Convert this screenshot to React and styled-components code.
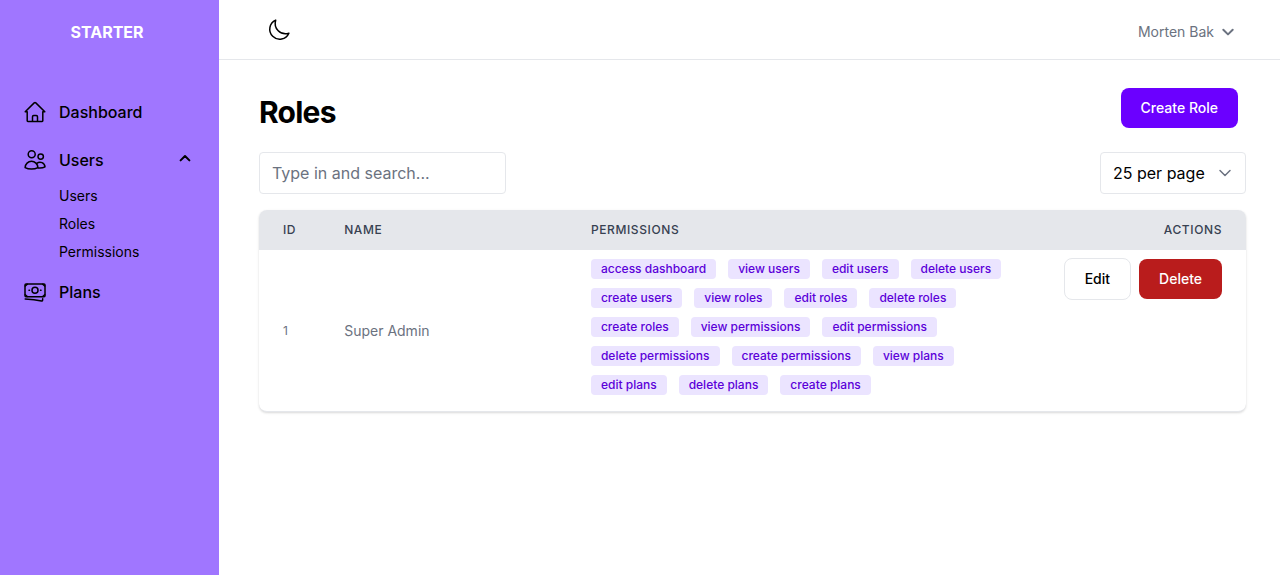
import React, { useState } from "react";
import styled, { createGlobalStyle, css } from "styled-components";

const GlobalStyle = createGlobalStyle`
  *, *::before, *::after { box-sizing: border-box; }
  body { margin: 0; background: #fff; color: #000; font-family: Inter, "Liberation Sans", sans-serif; font-size: 16px; line-height: 24px; }
  button, input, select { font: inherit; color: inherit; margin: 0; }
  a { color: inherit; text-decoration: none; }
`;

const Shell = styled.div`
  display: flex;
  min-height: 100vh;
`;

const Sidebar = styled.aside`
  flex: none;
  width: 219px;
  padding: 20px 24px;
  background: #a076ff;
`;

const Brand = styled.a`
  display: block;
  margin-right: 5px;
  color: #fff;
  font-weight: 700;
  text-align: center;
`;

const Nav = styled.nav`
  display: flex;
  flex-direction: column;
  gap: 12px;
  margin-top: 50px;
`;

const navItem = css`
  display: flex;
  align-items: center;
  gap: 13px;
  width: 100%;
  padding: 6px 0;
  border: 0;
  background: none;
  font-weight: 500;
  text-align: left;
`;

const NavLink = styled.a`${navItem}`;
const NavToggle = styled.button`
  ${navItem}
  cursor: pointer;
  & > :last-child { margin: 0 0 4px auto; }
`;

const SubMenu = styled.div`
  display: flex;
  flex-direction: column;
  gap: 8px;
  margin-top: 8px;
  padding-left: 35px;
  font-size: 14px;
  line-height: 20px;
`;

const Main = styled.div`
  flex: 1;
  min-width: 0;
`;

const TopBar = styled.header`
  display: flex;
  align-items: center;
  justify-content: space-between;
  height: 60px;
  padding: 0 42px 0 48px;
  border-bottom: 1px solid #e5e7eb;
`;

const IconButton = styled.button`
  display: flex;
  padding: 0;
  border: 0;
  background: none;
  cursor: pointer;
`;

const UserButton = styled.button`
  display: flex;
  align-items: center;
  gap: 4px;
  padding: 4px 0 0;
  border: 0;
  background: none;
  color: #6b7280;
  font-size: 14px;
  line-height: 20px;
  cursor: pointer;
`;

const Content = styled.main`
  padding: 28px 34px 28px 40px;
`;

const TitleRow = styled.div`
  display: flex;
  align-items: flex-start;
  justify-content: space-between;
  padding-right: 8px;
`;

const Title = styled.h1`
  margin: 6px 0 0;
  font-size: 30px;
  line-height: 36px;
  font-weight: 700;
  letter-spacing: -0.025em;
`;

const variants = {
  primary: css`background: #6b00ff; color: #fff;`,
  danger: css`background: #b91c1c; color: #fff;`,
  outline: css`background: #fff; color: #000; border: 1px solid #e5e7eb;`,
};

const Button = styled.button`
  padding: 10px 20px;
  border: 0;
  border-radius: 8px;
  font-size: 14px;
  line-height: 20px;
  font-weight: 500;
  cursor: pointer;
  ${({ $variant }) => variants[$variant]}
`;

const Filters = styled.div`
  display: flex;
  justify-content: space-between;
  margin: 22px 0 16px;
`;

const field = css`
  height: 42px;
  border: 1px solid #e5e7eb;
  border-radius: 4px;
  background-color: #fff;
`;

const Search = styled.input`
  ${field}
  width: 25%;
  padding: 8px 12px;
  &::placeholder { color: #6b7280; opacity: 1; }
`;

const SelectBox = styled.div`
  display: grid;
  align-items: center;
  & > * { grid-area: 1 / 1; }
  & > svg { justify-self: end; margin-right: 11px; pointer-events: none; }
`;

const Select = styled.select`
  ${field}
  width: 146px;
  padding: 8px 40px 8px 12px;
  appearance: none;
`;

const Card = styled.div`
  overflow: hidden;
  border-bottom: 1px solid #e5e7eb;
  border-radius: 8px;
  background: #fff;
  box-shadow: 0 1px 3px 0 rgba(0, 0, 0, 0.1), 0 1px 2px 0 rgba(0, 0, 0, 0.06);
`;

const Table = styled.table`
  width: 100%;
  border-collapse: collapse;
  table-layout: fixed;
`;

const Col = styled.col`
  width: ${({ $width }) => $width};
`;

const Th = styled.th`
  padding: 12px 24px;
  background: #e5e7eb;
  color: #374151;
  font-size: 12px;
  line-height: 16px;
  font-weight: 500;
  letter-spacing: 0.05em;
  text-align: ${({ $align }) => $align || "left"};
  text-transform: uppercase;
`;

const Td = styled.td`
  padding: 8px 24px;
  color: #6b7280;
  font-size: ${({ $small }) => ($small ? "12px" : "14px")};
  line-height: 20px;
  vertical-align: ${({ $top }) => ($top ? "top" : "middle")};
`;

const Tags = styled.div`
  display: flex;
  flex-wrap: wrap;
  gap: 9px 12px;
  padding: 1px 0 8px;
`;

const Tag = styled.span`
  padding: 2px 10px;
  border-radius: 4px;
  background: #ebe4ff;
  color: #5b00d9;
  font-size: 12px;
  line-height: 16px;
  font-weight: 500;
  white-space: nowrap;
`;

const Actions = styled.div`
  display: flex;
  align-items: center;
  justify-content: flex-end;
  gap: 8px;
`;

const Svg = styled.svg`
  flex: none;
  fill: none;
  stroke: currentColor;
  stroke-width: ${({ $stroke }) => $stroke || 1.5};
  stroke-linecap: round;
  stroke-linejoin: round;
`;

const HomeIcon = () => (
  <Svg width="22" height="22" viewBox="0 0 22 22" aria-hidden="true">
    <path d="M3.2 10.700H1.200L10.200 1.900Q11 1.200 11.800 1.900L20.800 10.700H18.800M3.200 10.700V19.800Q3.200 20.500 3.900 20.500H18.100Q18.800 20.500 18.800 19.800V10.700M8.500 20.300V15.700Q8.500 14.500 9.700 14.500H12.300Q13.500 14.500 13.500 15.700V20.300" />
  </Svg>
);

const UsersIcon = () => (
  <Svg width="22" height="22" viewBox="0 0 22 22" aria-hidden="true">
    <circle cx="7.700" cy="5.200" r="3.500" />
    <circle cx="16.700" cy="7.600" r="2.700" />
    <path d="M1.100 18.600C1.300 15 4 12.300 7.500 12.300s6.200 2.700 6.400 6.300c-3.600 2-9.200 2-12.800 0Z" />
    <path d="M12.800 14.400c3.300-2.700 8-.4 8.200 3.500-1.800 1-4.200 1.400-6.800 1.100" />
  </Svg>
);

const CashIcon = () => (
  <Svg width="22" height="22" viewBox="0 0 22 22" aria-hidden="true">
    <rect x="1" y="2.900" width="20" height="12.900" rx="1" />
    <circle cx="11" cy="9.300" r="3" />
    <path d="M5 9.300h.5M16.500 9.300h.5M1.300 5 3.300 3.200M18.700 3.200l2 1.800M1.300 13.700l2 1.800M18.700 15.500l2-1.800M1.200 18c6 .2 11 .7 16.300 1.900q1 .2 1.100-.7l.1-1.500" />
  </Svg>
);

const MoonIcon = () => (
  <Svg width="24" height="24" viewBox="0 0 24 24" aria-hidden="true">
    <path d="M8.700 2.100A10 10 0 1 0 21.900 15.300C13.500 17.800 6.200 10.500 8.700 2.100Z" />
  </Svg>
);

const Chevron = ({ up }) => (
  <Svg $stroke={2} width="20" height="20" viewBox="0 0 20 20" aria-hidden="true">
    <path d={up ? "M5.600 12.400 10 8l4.400 4.400" : "M5.300 7.700 10 12.400l4.700-4.700"} />
  </Svg>
);

const ArrowIcon = styled(Svg)`
  color: #6b7280;
`;

const PERMISSIONS = [
  "access dashboard", "view users", "edit users", "delete users",
  "create users", "view roles", "edit roles", "delete roles",
  "create roles", "view permissions", "edit permissions",
  "delete permissions", "create permissions", "view plans",
  "edit plans", "delete plans", "create plans",
];

const ROLES = [{ id: 1, name: "Super Admin", permissions: PERMISSIONS }];

export default function App() {
  const [open, setOpen] = useState(true);
  return (
    <>
      <GlobalStyle />
      <Shell>
        <Sidebar>
          <Brand href="#">STARTER</Brand>
          <Nav>
            <NavLink href="#dashboard"><HomeIcon />Dashboard</NavLink>
            <div>
              <NavToggle type="button" aria-expanded={open} onClick={() => setOpen(!open)}>
                <UsersIcon />Users<Chevron up={open} />
              </NavToggle>
              {open && (
                <SubMenu>
                  <a href="#users">Users</a>
                  <a href="#roles">Roles</a>
                  <a href="#permissions">Permissions</a>
                </SubMenu>
              )}
            </div>
            <NavLink href="#plans"><CashIcon />Plans</NavLink>
          </Nav>
        </Sidebar>
        <Main>
          <TopBar>
            <IconButton type="button" aria-label="Toggle dark mode"><MoonIcon /></IconButton>
            <UserButton type="button">Morten Bak<Chevron /></UserButton>
          </TopBar>
          <Content>
            <TitleRow>
              <Title>Roles</Title>
              <Button type="button" $variant="primary">Create Role</Button>
            </TitleRow>
            <Filters>
              <Search type="text" aria-label="Search roles" placeholder="Type in and search..." />
              <SelectBox>
                <Select aria-label="Roles per page" defaultValue="25">
                  <option value="10">10 per page</option>
                  <option value="25">25 per page</option>
                  <option value="50">50 per page</option>
                </Select>
                <ArrowIcon width="20" height="20" viewBox="0 0 20 20" aria-hidden="true">
                  <path d="m5 7.500 5 5 5-5" />
                </ArrowIcon>
              </SelectBox>
            </Filters>
            <Card>
              <Table>
                <colgroup>
                  <Col $width="6.2%" />
                  <Col $width="25%" />
                  <Col />
                  <Col $width="21%" />
                </colgroup>
                <thead>
                  <tr>
                    <Th scope="col">ID</Th>
                    <Th scope="col">Name</Th>
                    <Th scope="col">Permissions</Th>
                    <Th scope="col" $align="right">Actions</Th>
                  </tr>
                </thead>
                <tbody>
                  {ROLES.map((role) => (
                    <tr key={role.id}>
                      <Td $small>{role.id}</Td>
                      <Td>{role.name}</Td>
                      <Td $top>
                        <Tags>
                          {role.permissions.map((name) => <Tag key={name}>{name}</Tag>)}
                        </Tags>
                      </Td>
                      <Td $top>
                        <Actions>
                          <Button type="button" $variant="outline">Edit</Button>
                          <Button type="button" $variant="danger">Delete</Button>
                        </Actions>
                      </Td>
                    </tr>
                  ))}
                </tbody>
              </Table>
            </Card>
          </Content>
        </Main>
      </Shell>
    </>
  );
}
